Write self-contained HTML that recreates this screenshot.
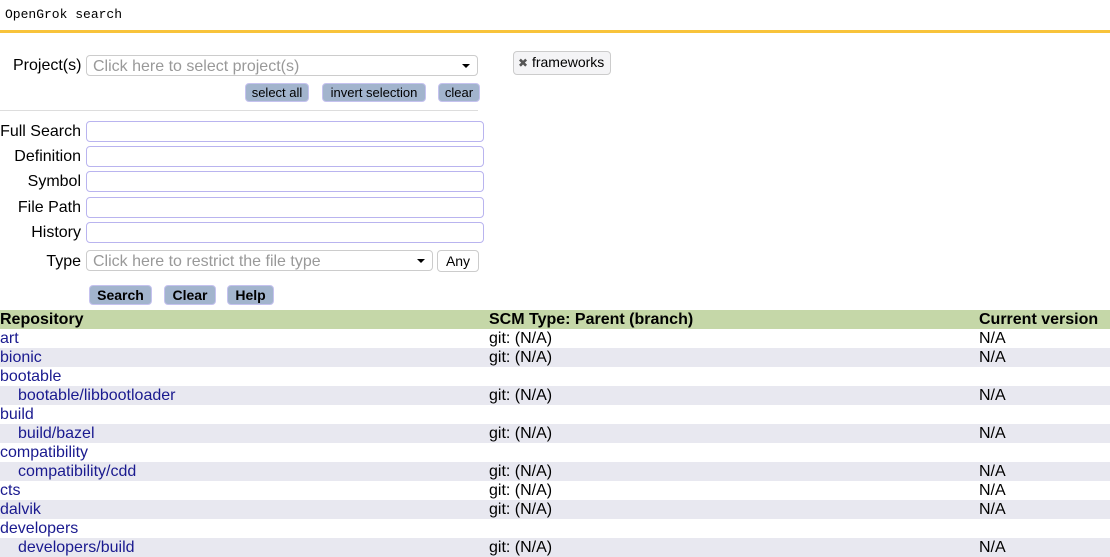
<!DOCTYPE html>
<html><head><style>
body{margin:0;font-family:"Liberation Sans",sans-serif;font-size:15px;color:#000;background:#fff;width:1110px;height:550px;overflow:hidden;position:relative}
.a{position:absolute}
.hdr{top:0;left:0;width:1110px;height:30px;border-bottom:3px solid #f8c33b;font-family:"Liberation Mono",monospace;font-size:13px}
.hdr span{position:absolute;left:5px;top:7px}
.lbl{right:1029px;text-align:right;white-space:nowrap}
.inp{left:86px;width:396px;height:19px;border:1px solid #b9b4ef;border-radius:4px}
.sel{border:1px solid #ccc;border-radius:4px;height:21px;color:#999;font-size:16px;line-height:21px;padding-left:6px;box-sizing:border-box}
.car{position:absolute;right:7px;top:8px;border:4px solid transparent;border-top:4px solid #000;border-bottom:0}
.btn{background:#a2b4cd;border:1px solid #c5c2ef;border-radius:4px;font-size:13px;height:17px;line-height:17px;text-align:center}
.bb{font-weight:bold;font-size:14px;height:18px;line-height:18px}
.row{left:0;width:1110px;height:19px;line-height:19px;font-size:16px}
.row span{position:absolute}
.c1{left:0}.c2{left:489px}.c3{left:979px}
.row a{color:#1a1a8f;text-decoration:none}
.alt{background:#e8e8f0}
</style></head><body>
<div class="a hdr"><span>OpenGrok search</span></div>
<div class="a" style="left:13px;top:57px;font-size:16px">Project(s)</div>
<div class="a sel" style="left:86px;top:55px;width:392px">Click here to select project(s)<i class="car"></i></div>
<div class="a btn" style="left:245px;top:83px;width:62px">select all</div>
<div class="a btn" style="left:322px;top:83px;width:102px">invert selection</div>
<div class="a btn" style="left:438px;top:83px;width:40px">clear</div>
<div class="a" style="left:513px;top:51px;height:22px;border:1px solid #ccc;border-radius:4px;background:#f4f4f6;font-size:14px;line-height:21px;padding:0 6px 0 4px"><span style="color:#555;font-size:12px">✖</span> frameworks</div>
<div class="a" style="left:0;top:110px;width:478px;border-top:1px solid #ddd"></div>
<div class="a lbl" style="top:123px;font-size:16px">Full Search</div><div class="a inp" style="top:121px"></div>
<div class="a lbl" style="top:148px;font-size:16px">Definition</div><div class="a inp" style="top:146px"></div>
<div class="a lbl" style="top:173px;font-size:16px">Symbol</div><div class="a inp" style="top:171px"></div>
<div class="a lbl" style="top:199px;font-size:16px">File Path</div><div class="a inp" style="top:197px"></div>
<div class="a lbl" style="top:224px;font-size:16px">History</div><div class="a inp" style="top:222px"></div>
<div class="a lbl" style="top:253px;font-size:16px">Type</div>
<div class="a sel" style="left:86px;top:250px;width:347px">Click here to restrict the file type<i class="car"></i></div>
<div class="a" style="left:437px;top:250px;width:40px;height:20px;border:1px solid #ccc;border-radius:4px;font-size:14px;line-height:20px;text-align:center">Any</div>
<div class="a btn bb" style="left:89px;top:285px;width:61px">Search</div>
<div class="a btn bb" style="left:164px;top:285px;width:50px">Clear</div>
<div class="a btn bb" style="left:227px;top:285px;width:45px">Help</div>
<div class="a row" style="top:310px;background:#c5d7a8;font-weight:bold"><span class="c1">Repository</span><span class="c2">SCM Type: Parent (branch)</span><span class="c3">Current version</span></div>
<div class="a row" style="top:329px"><span class="c1"><a>art</a></span><span class="c2">git: (N/A)</span><span class="c3">N/A</span></div>
<div class="a row alt" style="top:348px"><span class="c1"><a>bionic</a></span><span class="c2">git: (N/A)</span><span class="c3">N/A</span></div>
<div class="a row" style="top:367px"><span class="c1"><a>bootable</a></span></div>
<div class="a row alt" style="top:386px"><span class="c1" style="left:18px"><a>bootable/libbootloader</a></span><span class="c2">git: (N/A)</span><span class="c3">N/A</span></div>
<div class="a row" style="top:405px"><span class="c1"><a>build</a></span></div>
<div class="a row alt" style="top:424px"><span class="c1" style="left:18px"><a>build/bazel</a></span><span class="c2">git: (N/A)</span><span class="c3">N/A</span></div>
<div class="a row" style="top:443px"><span class="c1"><a>compatibility</a></span></div>
<div class="a row alt" style="top:462px"><span class="c1" style="left:18px"><a>compatibility/cdd</a></span><span class="c2">git: (N/A)</span><span class="c3">N/A</span></div>
<div class="a row" style="top:481px"><span class="c1"><a>cts</a></span><span class="c2">git: (N/A)</span><span class="c3">N/A</span></div>
<div class="a row alt" style="top:500px"><span class="c1"><a>dalvik</a></span><span class="c2">git: (N/A)</span><span class="c3">N/A</span></div>
<div class="a row" style="top:519px"><span class="c1"><a>developers</a></span></div>
<div class="a row alt" style="top:538px"><span class="c1" style="left:18px"><a>developers/build</a></span><span class="c2">git: (N/A)</span><span class="c3">N/A</span></div>
</body></html>
